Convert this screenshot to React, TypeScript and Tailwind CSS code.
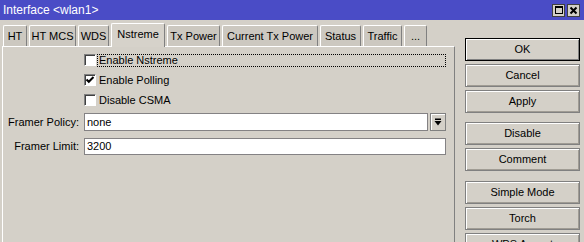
import React from 'react';

const tabs = [
  { label: 'HT', w: 'w-[24px]' },
  { label: 'HT MCS', w: 'w-[47px]' },
  { label: 'WDS', w: 'w-[31px]' },
  { label: 'Nstreme', w: 'w-[54px]', active: true },
  { label: 'Tx Power', w: 'w-[53px]' },
  { label: 'Current Tx Power', w: 'w-[96px]' },
  { label: 'Status', w: 'w-[41px]' },
  { label: 'Traffic', w: 'w-[39px]' },
  { label: '...', w: 'w-[23px]' },
];

const Checkbox: React.FC<{ checked?: boolean }> = ({ checked }) => (
  <span className="w-[12px] h-[12px] bg-white border border-t-[#808080] border-l-[#808080] border-b-white border-r-white shadow-[inset_1px_1px_0_#404040] flex items-center justify-center">
    {checked && (
      <svg width="10" height="10" viewBox="0 0 10 10">
        <polyline points="1.5,4.5 3.8,6.8 8.5,2" fill="none" stroke="#000" strokeWidth="2" />
      </svg>
    )}
  </span>
);

const Button: React.FC<{ label: string; primary?: boolean; className?: string }> = ({ label, primary, className = '' }) => (
  <button
    className={`w-[115px] h-[23px] bg-[#d4d0c8] text-[11px] text-black flex items-center justify-center ${
      primary
        ? 'border border-black shadow-[inset_1px_1px_0_#ffffff,inset_-1px_-1px_0_#808080]'
        : 'border border-[#808080] shadow-[inset_1px_1px_0_#ffffff,inset_-1px_-1px_0_#a09c94]'
    } ${className}`}
  >
    {label}
  </button>
);

const App: React.FC = () => {
  return (
    <div className="w-[584px] h-[242px] overflow-hidden bg-[#d4d0c8] font-['Liberation_Sans',Arial,sans-serif] text-[11px] text-black">
      {/* Title bar */}
      <div className="h-[20px] bg-[#4a4cc6] flex items-center justify-between pl-[3px] pr-[4px]">
        <span className="text-white text-[12px] leading-none">Interface &lt;wlan1&gt;</span>
        <div className="flex gap-[2px]">
          <span className="w-[13px] h-[13px] bg-[#d4d0c8] border border-[#404040] flex items-center justify-center">
            <span className="w-[8px] h-[8px] border border-black border-t-2" />
          </span>
          <span className="w-[13px] h-[13px] bg-[#d4d0c8] border border-[#404040] flex items-center justify-center">
            <svg width="9" height="9" viewBox="0 0 9 9">
              <path d="M1.5 1.5 L7.5 7.5 M7.5 1.5 L1.5 7.5" stroke="#000" strokeWidth="2" />
            </svg>
          </span>
        </div>
      </div>

      <div className="flex">
        {/* Left: tabs + panel */}
        <div className="w-[455px]">
          <div className="h-[26px] flex items-end gap-[2px] pl-[3px]">
            {tabs.map(t => (
              <div
                key={t.label}
                className={`${t.w} flex items-center justify-center border-t border-l border-r border-t-white border-l-white border-r-[#808080] rounded-t-[2px] ${
                  t.active ? 'h-[24px] -mb-[1px] relative z-10 bg-[#d6d2ca] pb-[2px]' : 'h-[21px] bg-[#ccc8c0]'
                }`}
              >
                {t.label}
              </div>
            ))}
          </div>
          <div className="ml-[2px] w-[453px] h-[200px] border-t border-l border-r border-t-white border-l-white border-r-[#808080] pt-[3px]">
            <div className="flex flex-col">
              <div className="h-[20px] flex items-center pl-[81px]">
                <Checkbox />
                <span className="ml-[1px] w-[349px] h-[13px] border border-dotted border-black pl-[1px] flex items-center">Enable Nstreme</span>
              </div>
              <div className="h-[20px] flex items-center pl-[81px]">
                <Checkbox checked />
                <span className="ml-[2px] pl-[1px]">Enable Polling</span>
              </div>
              <div className="h-[20px] flex items-center pl-[81px]">
                <Checkbox />
                <span className="ml-[2px] pl-[1px]">Disable CSMA</span>
              </div>
              <div className="mt-[3px] h-[18px] flex items-center">
                <span className="w-[76px] text-right">Framer Policy:</span>
                <div className="ml-[5px] w-[344px] h-[18px] bg-white border border-[#848284] flex items-center pl-[2px]">none</div>
                <div className="ml-[2px] w-[16px] h-[18px] bg-[#d4d0c8] border border-[#808080] shadow-[inset_1px_1px_0_#ffffff] flex items-center justify-center">
                  <svg width="8" height="8" viewBox="0 0 8 8">
                    <rect x="1" y="0.5" width="6" height="1.5" fill="#000" />
                    <path d="M0.5 3 H7.5 L4 7.5 Z" fill="#000" />
                  </svg>
                </div>
              </div>
              <div className="mt-[7px] h-[17px] flex items-center">
                <span className="w-[76px] text-right">Framer Limit:</span>
                <div className="ml-[5px] w-[362px] h-[17px] bg-white border border-[#848284] flex items-center pl-[2px]">3200</div>
              </div>
            </div>
          </div>
        </div>

        {/* Right: buttons */}
        <div className="pl-[10px] pt-[18px] flex flex-col gap-[3px]">
          <Button label="OK" primary />
          <Button label="Cancel" />
          <Button label="Apply" />
          <Button label="Disable" className="mt-[6px]" />
          <Button label="Comment" />
          <Button label="Simple Mode" className="mt-[7px]" />
          <Button label="Torch" />
          <Button label="WPS Accept" />
        </div>
      </div>
    </div>
  );
};

export default App;
